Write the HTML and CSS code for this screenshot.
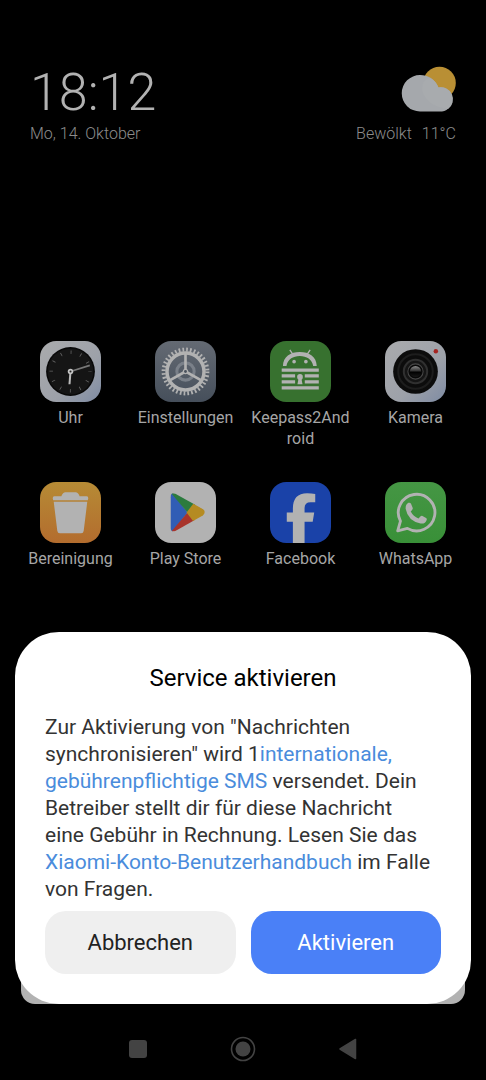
FILE: index.html
```html
<!DOCTYPE html>
<html lang="de">
   <head>
      <meta charset="UTF-8" />
      <meta name="viewport" content="width=device-width, initial-scale=1.0"/>
      <title>Service aktivieren</title>
      <link rel="stylesheet" href="styles.css">
   </head>
   <body>
      <header class="widgets">
         <div class="clock">
            <time class="time">18:12</time>
            <p class="date">Mo, 14. Oktober</p>
         </div>
         <div class="weather">
            <svg class="weather-icon" viewBox="0 0 56 46" aria-hidden="true">
               <circle cx="39.5" cy="17" r="16.3" fill="#b98f34"/>
               <path d="M20 45.5A18 18 0 0 1 20 9C28 9 35 13 38.5 21.5A12 12 0 0 1 42 45.5Z" fill="#a5a8ac"/>
               <path d="M22 24Q22 13 30 12 36 15 38.5 21.5A12 12 0 0 1 48 43Q26 40 22 24Z" fill="#a8abae"/>
            </svg>
            <p class="conditions"><span>Bewölkt</span><span>11°C</span></p>
         </div>
      </header>
      <main class="apps">
         <a class="app" href="#uhr">
            <svg class="app-icon" viewBox="0 0 60 60" aria-hidden="true">
               <defs>
                  <linearGradient id="silver" x1="0" y1="0" x2="1" y2="1">
                     <stop offset="0" stop-color="#aaabad"/>
                     <stop offset=".6" stop-color="#9da1a9"/>
                     <stop offset="1" stop-color="#7e8ba3"/>
                  </linearGradient>
               </defs>
               <rect width="60" height="60" rx="16" fill="url(#silver)"/>
               <circle cx="30" cy="30" r="24" fill="#090909"/>
               <circle cx="30" cy="30" r="22.5" fill="#151515"/>
               <circle cx="30" cy="30" r="19" fill="none" stroke="#666" stroke-width="3.5" stroke-dasharray=".8 9.148" stroke-dashoffset=".4"/>
               <path d="M30 30l19-6" stroke="#777" stroke-width="1.8"/>
               <path d="M30 30l-1 12.5" stroke="#bbb" stroke-width="2"/>
               <circle cx="30" cy="30" r="2.7" fill="#c4c4c4"/>
               <circle cx="30" cy="30" r="1" fill="#222"/>
            </svg>
            <span class="app-name">Uhr</span>
         </a>
         <a class="app" href="#einstellungen">
            <svg class="app-icon" viewBox="0 0 60 60" aria-hidden="true">
               <defs>
                  <linearGradient id="slate" x1="0" y1="0" x2="0" y2="1">
                     <stop offset="0" stop-color="#646a73"/>
                     <stop offset="1" stop-color="#464f5b"/>
                  </linearGradient>
               </defs>
               <rect width="60" height="60" rx="16" fill="url(#slate)"/>
               <circle cx="30" cy="30" r="8.5" fill="none" stroke="#7a8089" stroke-width="3"/>
               <circle cx="30" cy="30" r="21.5" fill="none" stroke="#b2b2b2" stroke-width="4" stroke-dasharray="1.7 2.053"/>
               <circle cx="30" cy="30" r="18.2" fill="none" stroke="#b2b2b2" stroke-width="3.4"/>
               <path d="M30 30V12M30 30l-16 9M30 30l16 9" stroke="#b2b2b2" stroke-width="2.6"/>
               <circle cx="30" cy="30" r="2.6" fill="#b2b2b2"/>
               <circle cx="30" cy="30" r="1.4" fill="#4a525d"/>
            </svg>
            <span class="app-name">Einstellungen</span>
         </a>
         <a class="app" href="#keepass">
            <svg class="app-icon" viewBox="0 0 60 60" aria-hidden="true">
               <rect width="60" height="60" rx="16" fill="#37712f"/>
               <path d="M12.7 24.7C13 15 20 10.7 29.3 10.7S45.7 15 46 24.7H42.5C41.5 18 36 14.7 29.3 14.7S17.2 18 16.2 24.7Z" fill="#b2b2b2"/>
               <path d="M19.5 8.7l3 4.5M39.5 8.7l-3 4.5" stroke="#b2b2b2" stroke-width="1.3"/>
               <circle cx="23.7" cy="20.3" r="1.8" fill="#b2b2b2"/>
               <circle cx="35.3" cy="20.3" r="1.8" fill="#b2b2b2"/>
               <path d="M11.5 27H48v3.2H11.5zM11.5 32.8h13.2V36H11.5zM34.2 32.8H48V36H34.2zM11.5 38.6h13.2v3.2H11.5zM34.2 38.6H48v3.2H34.2zM11.5 44.6H48v3.2H11.5z" fill="#b2b2b2"/>
               <circle cx="29.5" cy="35.3" r="2.8" fill="#b2b2b2"/>
               <path d="M28.3 36h2.4l1.3 6.5h-5z" fill="#b2b2b2"/>
            </svg>
            <span class="app-name">Keepass2And<wbr>roid</span>
         </a>
         <a class="app" href="#kamera">
            <svg class="app-icon" viewBox="0 0 60 60" aria-hidden="true">
               <defs>
                  <linearGradient id="glass" x1="0" y1="0" x2="0" y2="1">
                     <stop offset="0" stop-color="#8c8c8c"/>
                     <stop offset=".45" stop-color="#333"/>
                     <stop offset=".55" stop-color="#000"/>
                     <stop offset="1" stop-color="#181818"/>
                  </linearGradient>
               </defs>
               <rect width="60" height="60" rx="16" fill="url(#silver)"/>
               <circle cx="50" cy="10" r="2.2" fill="#a52522"/>
               <circle cx="30" cy="30" r="22" fill="#0c0c0c"/>
               <circle cx="30" cy="30" r="17" fill="none" stroke="#1d1d1d" stroke-width="2"/>
               <circle cx="30" cy="30" r="11.5" fill="#151515" stroke="#303030" stroke-width="2"/>
               <circle cx="30" cy="30" r="7.5" fill="#080808" stroke="#484848" stroke-width="1"/>
               <circle cx="30" cy="30" r="5.5" fill="url(#glass)"/>
            </svg>
            <span class="app-name">Kamera</span>
         </a>
         <a class="app" href="#bereinigung">
            <svg class="app-icon" viewBox="0 0 60 60" aria-hidden="true">
               <defs>
                  <linearGradient id="amber" x1="0" y1="0" x2="0" y2="1">
                     <stop offset="0" stop-color="#b68b35"/>
                     <stop offset="1" stop-color="#b36c2e"/>
                  </linearGradient>
               </defs>
               <rect width="60" height="60" rx="16" fill="url(#amber)"/>
               <path d="M14 14h7q1.5-4 4-4h10q2.5 0 4 4h7q1.5 0 1.5 2l-.5 2H13l-.5-2q0-2 1.5-2z" fill="#b2b2b2"/>
               <path d="M13.5 19.5h33L43 48q-.3 2.5-2.5 2.5h-21q-2.2 0-2.5-2.5z" fill="#b2b2b2"/>
            </svg>
            <span class="app-name">Bereinigung</span>
         </a>
         <a class="app" href="#playstore">
            <svg class="app-icon" viewBox="0 0 60 60" aria-hidden="true">
               <defs>
                  <clipPath id="play">
                     <path d="M15.3 15q0-5 4.7-3.5L47 26.5q4 3 0 6.5L20 48.3Q15.3 49.5 15.3 45z"/>
                  </clipPath>
               </defs>
               <rect width="60" height="60" rx="16" fill="#b2b2b2"/>
               <g clip-path="url(#play)">
                  <path d="M15 8v44l17-22z" fill="#315db5"/>
                  <path d="M15 10l17 20 8-8L20 8z" fill="#2c7b3e"/>
                  <path d="M15 50l17-20 8 9-20 13z" fill="#a8342b"/>
                  <path d="M38 21l-7 9 7 9 16-9z" fill="#b58b22"/>
               </g>
            </svg>
            <span class="app-name">Play Store</span>
         </a>
         <a class="app" href="#facebook">
            <svg class="app-icon" viewBox="0 0 60 60" aria-hidden="true">
               <rect width="60" height="60" rx="16" fill="#1a42a8"/>
               <path d="M22.5 60V39H16.5V30h6V26q0-15 14-15 4.500 0 8 .8v8.200h-4.500q-6 0-6 5.500V30h9.500l-1.500 9h-8v21z" fill="#b2b2b2"/>
            </svg>
            <span class="app-name">Facebook</span>
         </a>
         <a class="app" href="#whatsapp">
            <svg class="app-icon" viewBox="0 0 60 60" aria-hidden="true">
               <defs>
                  <linearGradient id="green" x1="0" y1="0" x2="0" y2="1">
                     <stop offset="0" stop-color="#459644"/>
                     <stop offset="1" stop-color="#399038"/>
                  </linearGradient>
               </defs>
               <rect width="60" height="60" rx="16" fill="url(#green)"/>
               <path d="M12.5 48l2.7-9.5A18 18 0 1 1 22 45.6z" fill="none" stroke="#b2b2b2" stroke-width="2.8" stroke-linejoin="round"/>
               <path d="M23 20.5q1.8-.7 2.6 1l1.7 4q.4 1.2-2 3.5 2.5 4.8 7.7 7 2.2-3.2 3.4-2.7l4 2q1 .6.6 2-1.200 4-6 3.500-12.500-2.500-14.700-14.500-.2-4.200 2.700-5.800z" fill="#b2b2b2"/>
            </svg>
            <span class="app-name">WhatsApp</span>
         </a>
      </main>
      <section class="dialog" role="dialog" aria-labelledby="dialogTitle">
         <div class="dialog-card">
            <h1 id="dialogTitle">Service aktivieren</h1>
            <p class="message">Zur Aktivierung von "Nachrichten<br>synchronisieren" wird 1<a href="#sms">internationale,<br>gebührenpflichtige SMS</a> versendet. Dein<br>Betreiber stellt dir für diese Nachricht<br>eine Gebühr in Rechnung. Lesen Sie das<br><a href="#handbuch">Xiaomi-Konto-Benutzerhandbuch</a> im Falle<br>von Fragen.</p>
            <div class="actions">
               <button type="button" class="button">Abbrechen</button>
               <button type="button" class="button button-primary">Aktivieren</button>
            </div>
         </div>
      </section>
      <nav class="system-nav">
         <button type="button" aria-label="Letzte Apps">
            <svg viewBox="0 0 28 28"><rect x="5" y="5" width="18" height="18" rx="3" fill="#434343"/></svg>
         </button>
         <button type="button" aria-label="Startseite">
            <svg viewBox="0 0 28 28"><circle cx="14" cy="14" r="11.5" fill="none" stroke="#434343" stroke-width="1.6"/><circle cx="14" cy="14" r="7.5" fill="#434343"/></svg>
         </button>
         <button type="button" aria-label="Zurück">
            <svg viewBox="0 0 28 28"><path d="M6 14L21.5 4.5v19z" fill="#434343" stroke="#434343" stroke-width="1.5" stroke-linejoin="round"/></svg>
         </button>
      </nav>
   </body>
</html>
```

FILE: styles.css
```css
* {
box-sizing: border-box;
}
body {
margin: 0;
min-height: 100vh;
display: flex;
flex-direction: column;
background-color: #000;
color: #aaa;
font-family: Roboto, sans-serif;
font-weight: 300;
}
h1, p {
margin: 0;
}
.widgets {
display: flex;
justify-content: space-between;
align-items: flex-end;
padding: 62px 30px 0;
}
.time {
display: block;
color: #b2b2b2;
font-size: 52px;
line-height: 62px;
}
.date, .conditions {
color: #8c8c8c;
font-size: 16px;
line-height: 20px;
}
.weather {
display: flex;
flex-direction: column;
align-items: flex-end;
gap: 12px;
}
.weather-icon {
width: 56px;
height: 46px;
}
.conditions {
display: flex;
gap: 10px;
}
.apps {
display: grid;
grid-template-columns: repeat(4, 1fr);
gap: 33px 0;
padding: 0 13px;
margin-top: 197px;
}
.app {
display: flex;
flex-direction: column;
align-items: center;
gap: 5px;
color: #a6a6a6;
text-decoration: none;
}
.app-icon {
width: 61px;
height: 61px;
}
.app-name {
max-width: 108px;
font-size: 16px;
font-weight: 400;
line-height: 21px;
text-align: center;
}
.dialog {
position: relative;
margin: auto 15px 0;
}
/* dock edge that shows behind the card corners */
.dialog::before {
content: "";
position: absolute;
inset: auto 6px 0;
height: 60px;
border-radius: 14px;
background-color: #b2b2b2;
}
.dialog-card {
position: relative;
padding: 32px 30px 30px;
border-radius: 44px;
background-color: #fff;
}
h1 {
color: #000;
font-size: 24px;
font-weight: 400;
line-height: 28px;
text-align: center;
}
.message {
margin-top: 22px;
color: #333;
font-size: 21px;
font-weight: 400;
line-height: 27px;
white-space: nowrap;
}
.message a {
color: #4a8cdc;
text-decoration: none;
}
.actions {
display: flex;
gap: 15px;
margin-top: 8px;
}
.button {
flex: 1;
height: 63px;
border: none;
border-radius: 21px;
background-color: #efefef;
color: #222;
font-family: inherit;
font-size: 22px;
font-weight: 400;
cursor: pointer;
}
.button-primary {
background-color: #4a80f7;
color: #fff;
}
.system-nav {
display: flex;
justify-content: center;
gap: 77px;
padding: 31px 0 17px;
}
.system-nav button {
width: 28px;
height: 28px;
padding: 0;
border: none;
background: none;
cursor: pointer;
}
.system-nav svg {
display: block;
}
```
